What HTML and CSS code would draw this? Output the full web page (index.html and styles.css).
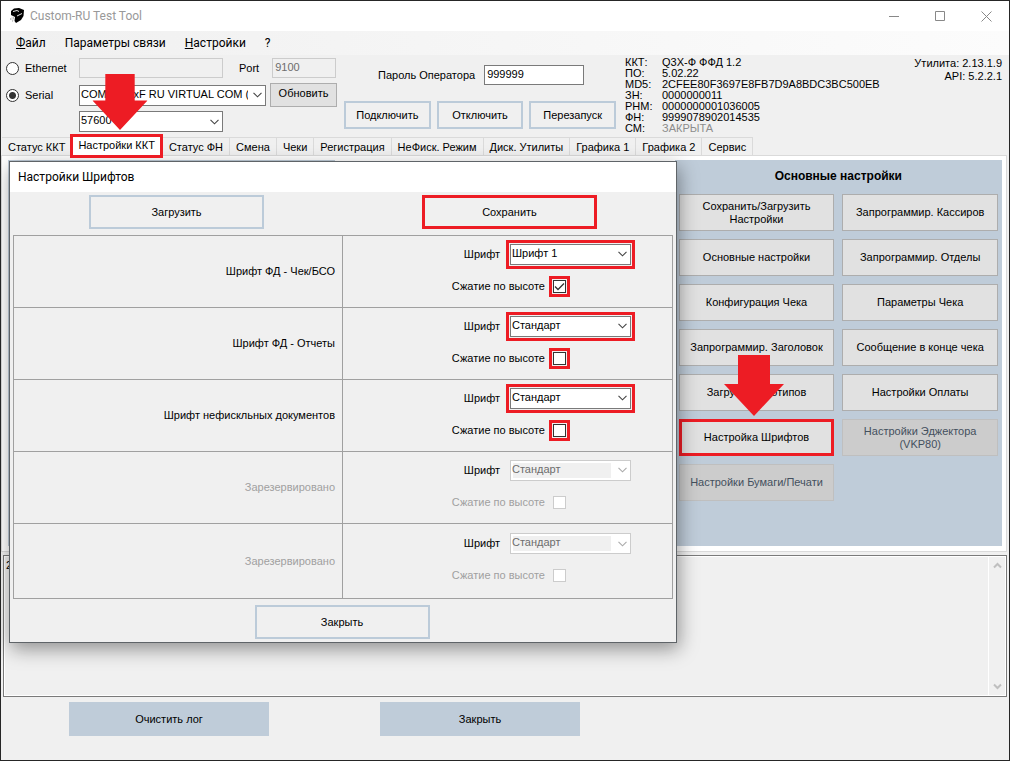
FILE: index.html
```html
<!DOCTYPE html>
<html lang="ru">
<head>
<meta charset="utf-8">
<title>Custom-RU Test Tool</title>
<link rel="stylesheet" href="styles.css">
</head>
<body>
<svg class="defs" aria-hidden="true">
  <symbol id="chevron" viewBox="0 0 9 6"><path d="M.5 .8 4.500 4.800 8.500 .8" fill="none" stroke="currentColor" stroke-width="1.100"/></symbol>
  <symbol id="arrow" viewBox="0 0 60 61"><path d="M14 0H46V29H60L30 61 0 29H14Z" fill="#ed1c24"/></symbol>
</svg>
<div class="window">
  <header class="titlebar">
    <svg class="logo" viewBox="0 0 16 16" aria-hidden="true">
      <path d="M2 3 5 .500 10 0 15 2 14.500 8 12 12 7 15 5.500 13 6 9 2 7Z" fill="#000"/>
      <path d="M4 3.500 8 2.500 10 3.500M8 8 13 5.500" fill="none" stroke="#fff" stroke-width=".9"/>
      <path d="M3 8.500 5 9.500 4.500 13 1 11.500Z" fill="#e4e4e4"/>
      <path d="M1 11h1M3 13h1M4 10h1" stroke="#999"/>
    </svg>
    <h1 class="title">Custom-RU Test Tool</h1>
    <div class="caption-buttons">
      <button class="caption" aria-label="Свернуть"><svg width="11" height="11"><path d="M0 5.500H10" stroke="#888"/></svg></button>
      <button class="caption" aria-label="Развернуть"><svg width="11" height="11"><path d="M.5 .5H9.500V9.500H.5Z" fill="none" stroke="#888"/></svg></button>
      <button class="caption" aria-label="Закрыть окно"><svg width="11" height="11"><path d="M.5 .5 10.500 10.500M10.500 .5 .5 10.500" stroke="#888"/></svg></button>
    </div>
  </header>
  <nav class="menubar">
    <button class="menu"><u>Ф</u>айл</button>
    <button class="menu">Параметры связи</button>
    <button class="menu"><u>Н</u>астройки</button>
    <button class="menu">?</button>
  </nav>
  <section class="connection">
    <div class="ports">
      <label class="radio"><input type="radio" name="port">Ethernet</label>
      <div class="port-line">
        <input class="field host" aria-label="IP адрес" disabled>
        <label class="port-label" for="port">Port</label>
        <input class="field port" id="port" value="9100" disabled>
      </div>
      <label class="radio"><input type="radio" name="port" checked>Serial</label>
      <div class="port-line serial">
        <span class="combo com"><select aria-label="COM порт"><option>COM4: Q3xF RU VIRTUAL COM (</option></select><svg><use href="#chevron"/></svg></span>
        <button class="btn refresh">Обновить</button>
      </div>
      <span class="combo baud"><select aria-label="Скорость"><option>57600</option></select><svg><use href="#chevron"/></svg></span>
    </div>
    <div class="operator">
      <div class="password"><label for="pass">Пароль Оператора</label><input class="field" id="pass" value="999999"></div>
      <div class="operator-buttons">
        <button class="btn framed">Подключить</button>
        <button class="btn framed">Отключить</button>
        <button class="btn framed">Перезапуск</button>
      </div>
    </div>
    <dl class="info">
      <dt>ККТ:</dt><dd>Q3X-Ф ФФД 1.2</dd>
      <dt>ПО:</dt><dd>5.02.22</dd>
      <dt>MD5:</dt><dd>2CFEE80F3697E8FB7D9A8BDC3BC500EB</dd>
      <dt>ЗН:</dt><dd>0000000011</dd>
      <dt>РНМ:</dt><dd>0000000001036005</dd>
      <dt>ФН:</dt><dd>9999078902014535</dd>
      <dt>СМ:</dt><dd class="closed">ЗАКРЫТА</dd>
    </dl>
    <p class="version">Утилита: 2.13.1.9<br>API: 5.2.2.1</p>
  </section>
  <div class="tabs" role="tablist">
    <button class="tab" role="tab">Статус ККТ</button>
    <button class="tab selected" role="tab" aria-selected="true">Настройки ККТ</button>
    <button class="tab" role="tab">Статус ФН</button>
    <button class="tab" role="tab">Смена</button>
    <button class="tab" role="tab">Чеки</button>
    <button class="tab" role="tab">Регистрация</button>
    <button class="tab" role="tab">НеФиск. Режим</button>
    <button class="tab" role="tab">Диск. Утилиты</button>
    <button class="tab" role="tab">Графика 1</button>
    <button class="tab" role="tab">Графика 2</button>
    <button class="tab" role="tab">Сервис</button>
  </div>
  <main class="page">
    <section class="panel"></section>
    <section class="panel settings">
      <h2>Основные настройки</h2>
      <div class="settings-grid">
        <button class="btn">Сохранить/Загрузить Настройки</button>
        <button class="btn">Запрограммир. Кассиров</button>
        <button class="btn">Основные настройки</button>
        <button class="btn">Запрограммир. Отделы</button>
        <button class="btn">Конфигурация Чека</button>
        <button class="btn">Параметры Чека</button>
        <button class="btn">Запрограммир. Заголовок</button>
        <button class="btn">Сообщение в конце чека</button>
        <button class="btn">Загрузка Логотипов</button>
        <button class="btn">Настройки Оплаты</button>
        <button class="btn marked">Настройка Шрифтов</button>
        <button class="btn" disabled>Настройки Эджектора (VKP80)</button>
        <button class="btn" disabled>Настройки Бумаги/Печати</button>
      </div>
    </section>
  </main>
  <section class="log">
    <textarea aria-label="Лог" readonly>2</textarea>
    <div class="scrollbar" aria-hidden="true">
      <svg width="9" height="7" viewBox="0 0 9 7"><path d="M1 5.500 4.500 2 8 5.500" fill="none" stroke="#bfbfbf" stroke-width="2"/></svg>
      <svg width="9" height="7" viewBox="0 0 9 7"><path d="M1 1.500 4.500 5 8 1.500" fill="none" stroke="#bfbfbf" stroke-width="2"/></svg>
    </div>
  </section>
  <footer class="footer">
    <button class="btn solid">Очистить лог</button>
    <button class="btn solid">Закрыть</button>
  </footer>

  <section class="dialog" role="dialog" aria-labelledby="dlg-title">
    <h2 class="dialog-title" id="dlg-title">Настройки Шрифтов</h2>
    <div class="dialog-actions">
      <button class="btn framed">Загрузить</button>
      <button class="btn framed marked">Сохранить</button>
    </div>
    <div class="fonts">
      <div class="name">Шрифт ФД - Чек/БСО</div>
      <div class="options">
        <div class="option"><label for="f1">Шрифт</label><span class="combo marked"><select id="f1"><option>Шрифт 1</option></select><svg><use href="#chevron"/></svg></span></div>
        <div class="option check"><label for="c1">Сжатие по высоте</label><input class="marked" type="checkbox" id="c1" checked></div>
      </div>
      <div class="name">Шрифт ФД - Отчеты</div>
      <div class="options">
        <div class="option"><label for="f2">Шрифт</label><span class="combo marked"><select id="f2"><option>Стандарт</option></select><svg><use href="#chevron"/></svg></span></div>
        <div class="option check"><label for="c2">Сжатие по высоте</label><input class="marked" type="checkbox" id="c2"></div>
      </div>
      <div class="name">Шрифт нефискльных документов</div>
      <div class="options">
        <div class="option"><label for="f3">Шрифт</label><span class="combo marked"><select id="f3"><option>Стандарт</option></select><svg><use href="#chevron"/></svg></span></div>
        <div class="option check"><label for="c3">Сжатие по высоте</label><input class="marked" type="checkbox" id="c3"></div>
      </div>
      <div class="name off">Зарезервировано</div>
      <div class="options">
        <div class="option"><label for="f4">Шрифт</label><span class="combo"><select id="f4" disabled><option>Стандарт</option></select><svg><use href="#chevron"/></svg></span></div>
        <div class="option check off"><label for="c4">Сжатие по высоте</label><input type="checkbox" id="c4" disabled></div>
      </div>
      <div class="name off">Зарезервировано</div>
      <div class="options">
        <div class="option"><label for="f5">Шрифт</label><span class="combo"><select id="f5" disabled><option>Стандарт</option></select><svg><use href="#chevron"/></svg></span></div>
        <div class="option check off"><label for="c5">Сжатие по высоте</label><input type="checkbox" id="c5" disabled></div>
      </div>
    </div>
    <div class="dialog-footer"><button class="btn framed">Закрыть</button></div>
  </section>
  <svg class="pointer pointer-tab" viewBox="0 0 60 61" aria-hidden="true"><use href="#arrow"/></svg>
  <svg class="pointer pointer-fonts" viewBox="0 0 60 61" aria-hidden="true"><use href="#arrow"/></svg>
</div>
</body>
</html>
```
FILE: styles.css
```css
* { box-sizing: border-box; }
body {
  margin: 0;
  font: 11px/13px "Liberation Sans", Arial, sans-serif;
  color: #000;
}
button, input, select, textarea { font: inherit; color: inherit; margin: 0; }
h1, h2, p, dl, dd { margin: 0; }
.defs { position: absolute; width: 0; height: 0; }

.window {
  position: relative;
  display: flex;
  flex-direction: column;
  min-height: 100vh;
  border: 1px solid #262626;
  background: #f0f0f0;
}
.titlebar {
  display: flex;
  align-items: center;
  height: 30px;
  padding-left: 8px;
  background: #fff;
}
.logo { width: 16px; height: 16px; margin-right: 5px; }
.title { font: 12px/16px Roboto, sans-serif; color: #999; }
.caption-buttons { display: flex; margin-left: auto; }
.caption {
  display: grid;
  place-items: center;
  width: 46px;
  height: 28px;
  padding: 0;
  border: 0;
  background: none;
}
.menubar {
  display: flex;
  height: 24px;
  padding-left: 7px;
  background: linear-gradient(90deg, #f0f0f0, #fcfcfc);
}
.menu {
  padding: 0 8px;
  margin-right: 3px;
  border: 0;
  background: none;
  font: 12px/16px Roboto, sans-serif;
}

.btn {
  padding: 0 4px;
  border: 1px solid #adadad;
  background: #e1e1e1;
}
.btn:disabled { border-color: #bfbfbf; background: #ccc; color: #44505e; }
.btn.framed { border: 2px solid #bccbd9; background: #f0f0f0; }
.btn.marked { border: 3px solid #ed1c24; }
.btn.solid { width: 200px; height: 34px; border: 0; background: #bfccd9; }
.field {
  height: 20px;
  padding: 0 2px 2px;
  border: 1px solid #7a7a7a;
  background: #fff;
}
.field:disabled { border-color: #ccc; background: #f0f0f0; color: #6d6d6d; }

.combo { display: inline-grid; height: 21px; color: #444; }
.combo select {
  grid-area: 1 / 1;
  min-width: 0;
  padding: 0 17px 2px 1px;
  border: 1px solid #7a7a7a;
  border-radius: 0;
  background: #fff;
  appearance: none;
  color: #000;
}
.combo svg {
  grid-area: 1 / 1;
  place-self: center end;
  width: 9px;
  height: 6px;
  margin-right: 4px;
  pointer-events: none;
}
.combo:has(select:disabled) { color: #aaa; }
.combo select:disabled {
  border-color: #ccc;
  background: linear-gradient(#f0f0f0, #f0f0f0) 2px 2px / calc(100% - 21px) 15px no-repeat #fff;
  color: #6d6d6d;
  opacity: 1;
}

.connection { display: flex; height: 82px; padding: 2px 7px 0 5px; }
.ports {
  display: grid;
  grid-template-columns: 73px 258px;
  grid-template-rows: 22px 32px 21px;
  align-content: start;
  align-items: center;
}
.radio { display: flex; align-items: center; gap: 6px; }
.radio input {
  appearance: none;
  width: 13px;
  height: 13px;
  border: 1px solid #333;
  border-radius: 50%;
  background: #fff;
}
.radio input:checked { background: radial-gradient(circle, #333 3px, #fff 4px); }
.port-line { display: flex; align-items: center; }
.host { width: 144px; }
.port-label { margin: 0 13px 0 16px; }
.port { width: 64px; }
.serial { gap: 4px; }
.com { width: 187px; }
.refresh { width: 67px; height: 24px; padding-bottom: 4px; }
.baud { grid-column: 2; width: 144px; }
.operator { width: 272px; margin: 8px 0 0 7px; }
.password { display: flex; align-items: center; padding-left: 34px; }
.password .field { width: 100px; margin-left: 9px; }
.operator-buttons { display: grid; grid-template-columns: repeat(3, 1fr); gap: 6px; margin-top: 16px; }
.operator-buttons .btn { height: 28px; }
.info {
  display: grid;
  grid-template-columns: 37px auto;
  align-content: start;
  margin-left: 9px;
  line-height: 11px;
}
.closed { color: #8c8c8c; }
.version { margin-left: auto; text-align: right; }

.tabs { display: flex; padding-left: 1px; }
.tab {
  height: 18px;
  padding: 1px 6px 0;
  border: 1px solid #dadada;
  border-left: 0;
  border-bottom: 0;
  background: #f0f0f0;
}
.tab.selected {
  z-index: 1;
  height: 24px;
  margin: -3px 0 -3px -2px;
  padding: 0 5px 2px;
  border: 3px solid #ed1c24;
  background: #fff;
}
.page {
  display: grid;
  grid-template-columns: repeat(3, 1fr);
  gap: 6px;
  min-height: 397px;
  margin-right: 2px;
  padding: 4px 4px 5px 6px;
  border: 1px solid #dadada;
  background: #fff;
}
.panel { background: #bfccd9; }
.settings { grid-column: 3; padding: 10px 4px; }
.settings h2 { font-size: 12px; line-height: 13px; text-align: center; }
.settings-grid {
  display: grid;
  grid-template-columns: 1fr 1fr;
  grid-auto-rows: 37px;
  gap: 8px;
  margin-top: 11px;
}

.log {
  display: flex;
  flex: 1;
  margin: 3px 2px 0;
  padding: 1px;
  border: 1px solid #7a7a7a;
  background: #fff;
}
.log textarea {
  flex: 1;
  padding: 2px 1px;
  border: 0;
  background: #f0f0f0;
  resize: none;
  outline: 0;
}
.scrollbar {
  display: flex;
  flex-direction: column;
  justify-content: space-between;
  align-items: center;
  width: 16px;
  margin-left: 1px;
  padding: 5px 0;
  background: #f0f0f0;
}
.footer { display: flex; gap: 111px; padding: 5px 68px 24px; }

.dialog {
  position: absolute;
  left: 8px;
  top: 160px;
  width: 668px;
  border: 1px solid #5f6468;
  background: #f0f0f0;
  box-shadow: 2px 6px 18px rgba(0, 0, 0, .4);
}
.dialog-title {
  height: 30px;
  padding-left: 8px;
  background: #fff;
  font: 12px/30px Roboto, sans-serif;
}
.dialog .btn { width: 175px; height: 34px; }
.dialog-actions { display: flex; gap: 158px; padding: 3px 79px 6px; }
.fonts {
  display: grid;
  grid-template-columns: 329fr 330fr;
  grid-template-rows: repeat(4, 72px) 75px;
  margin: 0 3px;
  border: 1px solid #a0a0a0;
  border-width: 1px 0 0 1px;
}
.name, .options {
  border: 1px solid #a0a0a0;
  border-width: 0 1px 1px 0;
  align-content: center;
}
.name { padding-right: 7px; text-align: right; }
.option { display: flex; align-items: center; gap: 10px; }
.option label { width: 157px; text-align: right; }
.option .combo { width: 121px; }
.option.check { gap: 8px; height: 15px; margin: 14px 0 6px; }
.option.check label { width: 202px; }
.off { color: #a0a0a0; }
input[type="checkbox"] {
  appearance: none;
  width: 13px;
  height: 13px;
  border: 1px solid #333;
  background: #fff;
}
input[type="checkbox"]:disabled { border-color: #ccc; }
input[type="checkbox"]:checked {
  background: url("data:image/svg+xml,%3Csvg xmlns='http://www.w3.org/2000/svg' viewBox='0 0 11 11'%3E%3Cpath d='M1 5.500 4 8.500 10 2.500' fill='none' stroke='%23333' stroke-width='1.300'/%3E%3C/svg%3E") #fff;
}
.combo.marked, input.marked { outline: 3px solid #ed1c24; outline-offset: 1px; }
.dialog-footer { display: flex; justify-content: center; padding: 6px 2px 3px 0; }

.pointer { position: absolute; z-index: 2; }
.pointer-tab { left: 91px; top: 73px; width: 56px; height: 56px; }
.pointer-fonts { left: 723px; top: 354px; width: 60px; height: 61px; }
```
